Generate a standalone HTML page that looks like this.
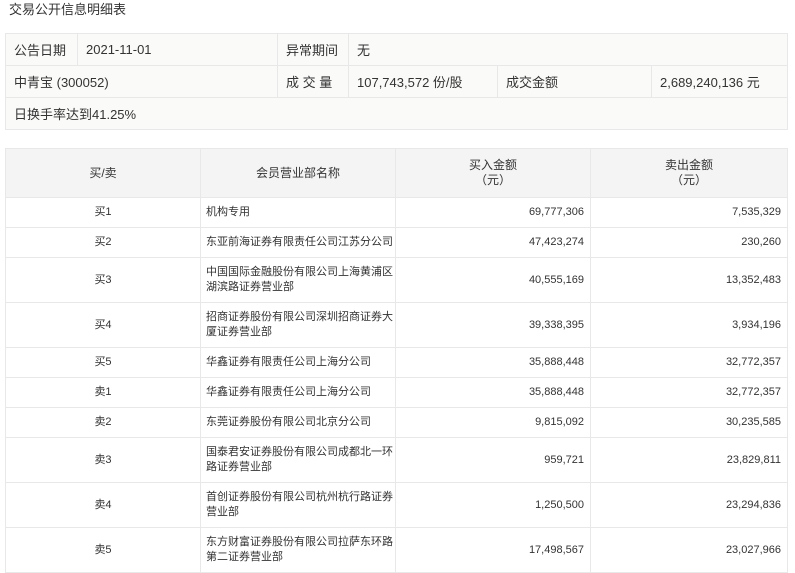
<!DOCTYPE html>
<html><head><meta charset="utf-8"><style>
body{margin:0;background:#fff;font-family:"Liberation Sans","Noto Sans CJK SC",sans-serif;color:#333;width:795px;height:571px;overflow:hidden;position:relative}
.t{position:absolute;left:9px;top:1px;font-size:13px;line-height:18px}
table{position:absolute;border-collapse:collapse;table-layout:fixed}
td{border:1px solid #e8e8e8;padding:0;box-sizing:border-box}
#a{left:5px;top:33px;width:782px;background:#fafaf8;font-size:13px}
#a td{height:32px;padding-left:8px}
#b{left:5px;top:148px;width:782px;font-size:11px}
#b td{line-height:15px}
#b tr.h td{background:#f4f4f4;text-align:center;font-size:12px;height:49px}
.c{text-align:center}.n{text-align:left;padding-left:5px!important}.r{text-align:right;padding-right:6px!important}
</style></head><body>
<div class="t">交易公开信息明细表</div>
<table id="a">
<colgroup><col style="width:72px"><col style="width:200px"><col style="width:71px"><col style="width:149px"><col style="width:154px"><col style="width:136px"></colgroup>
<tr><td>公告日期</td><td>2021-11-01</td><td>异常期间</td><td colspan="3">无</td></tr>
<tr><td colspan="2">中青宝 (300052)</td><td>成 交 量</td><td>107,743,572 份/股</td><td>成交金额</td><td>2,689,240,136 元</td></tr>
<tr><td colspan="6">日换手率达到41.25%</td></tr>
</table>
<table id="b">
<colgroup><col style="width:195px"><col style="width:195px"><col style="width:195px"><col style="width:197px"></colgroup>
<tr class="h"><td>买/卖</td><td>会员营业部名称</td><td>买入金额<br>（元）</td><td>卖出金额<br>（元）</td></tr>
<tr style="height:30px"><td class="c">买1</td><td class="n">机构专用</td><td class="r">69,777,306</td><td class="r">7,535,329</td></tr>
<tr style="height:30px"><td class="c">买2</td><td class="n">东亚前海证券有限责任公司江苏分公司</td><td class="r">47,423,274</td><td class="r">230,260</td></tr>
<tr style="height:45px"><td class="c">买3</td><td class="n">中国国际金融股份有限公司上海黄浦区湖滨路证券营业部</td><td class="r">40,555,169</td><td class="r">13,352,483</td></tr>
<tr style="height:45px"><td class="c">买4</td><td class="n">招商证券股份有限公司深圳招商证券大厦证券营业部</td><td class="r">39,338,395</td><td class="r">3,934,196</td></tr>
<tr style="height:30px"><td class="c">买5</td><td class="n">华鑫证券有限责任公司上海分公司</td><td class="r">35,888,448</td><td class="r">32,772,357</td></tr>
<tr style="height:30px"><td class="c">卖1</td><td class="n">华鑫证券有限责任公司上海分公司</td><td class="r">35,888,448</td><td class="r">32,772,357</td></tr>
<tr style="height:30px"><td class="c">卖2</td><td class="n">东莞证券股份有限公司北京分公司</td><td class="r">9,815,092</td><td class="r">30,235,585</td></tr>
<tr style="height:45px"><td class="c">卖3</td><td class="n">国泰君安证券股份有限公司成都北一环路证券营业部</td><td class="r">959,721</td><td class="r">23,829,811</td></tr>
<tr style="height:45px"><td class="c">卖4</td><td class="n">首创证券股份有限公司杭州杭行路证券营业部</td><td class="r">1,250,500</td><td class="r">23,294,836</td></tr>
<tr style="height:45px"><td class="c">卖5</td><td class="n">东方财富证券股份有限公司拉萨东环路第二证券营业部</td><td class="r">17,498,567</td><td class="r">23,027,966</td></tr>
</table>
</body></html>
